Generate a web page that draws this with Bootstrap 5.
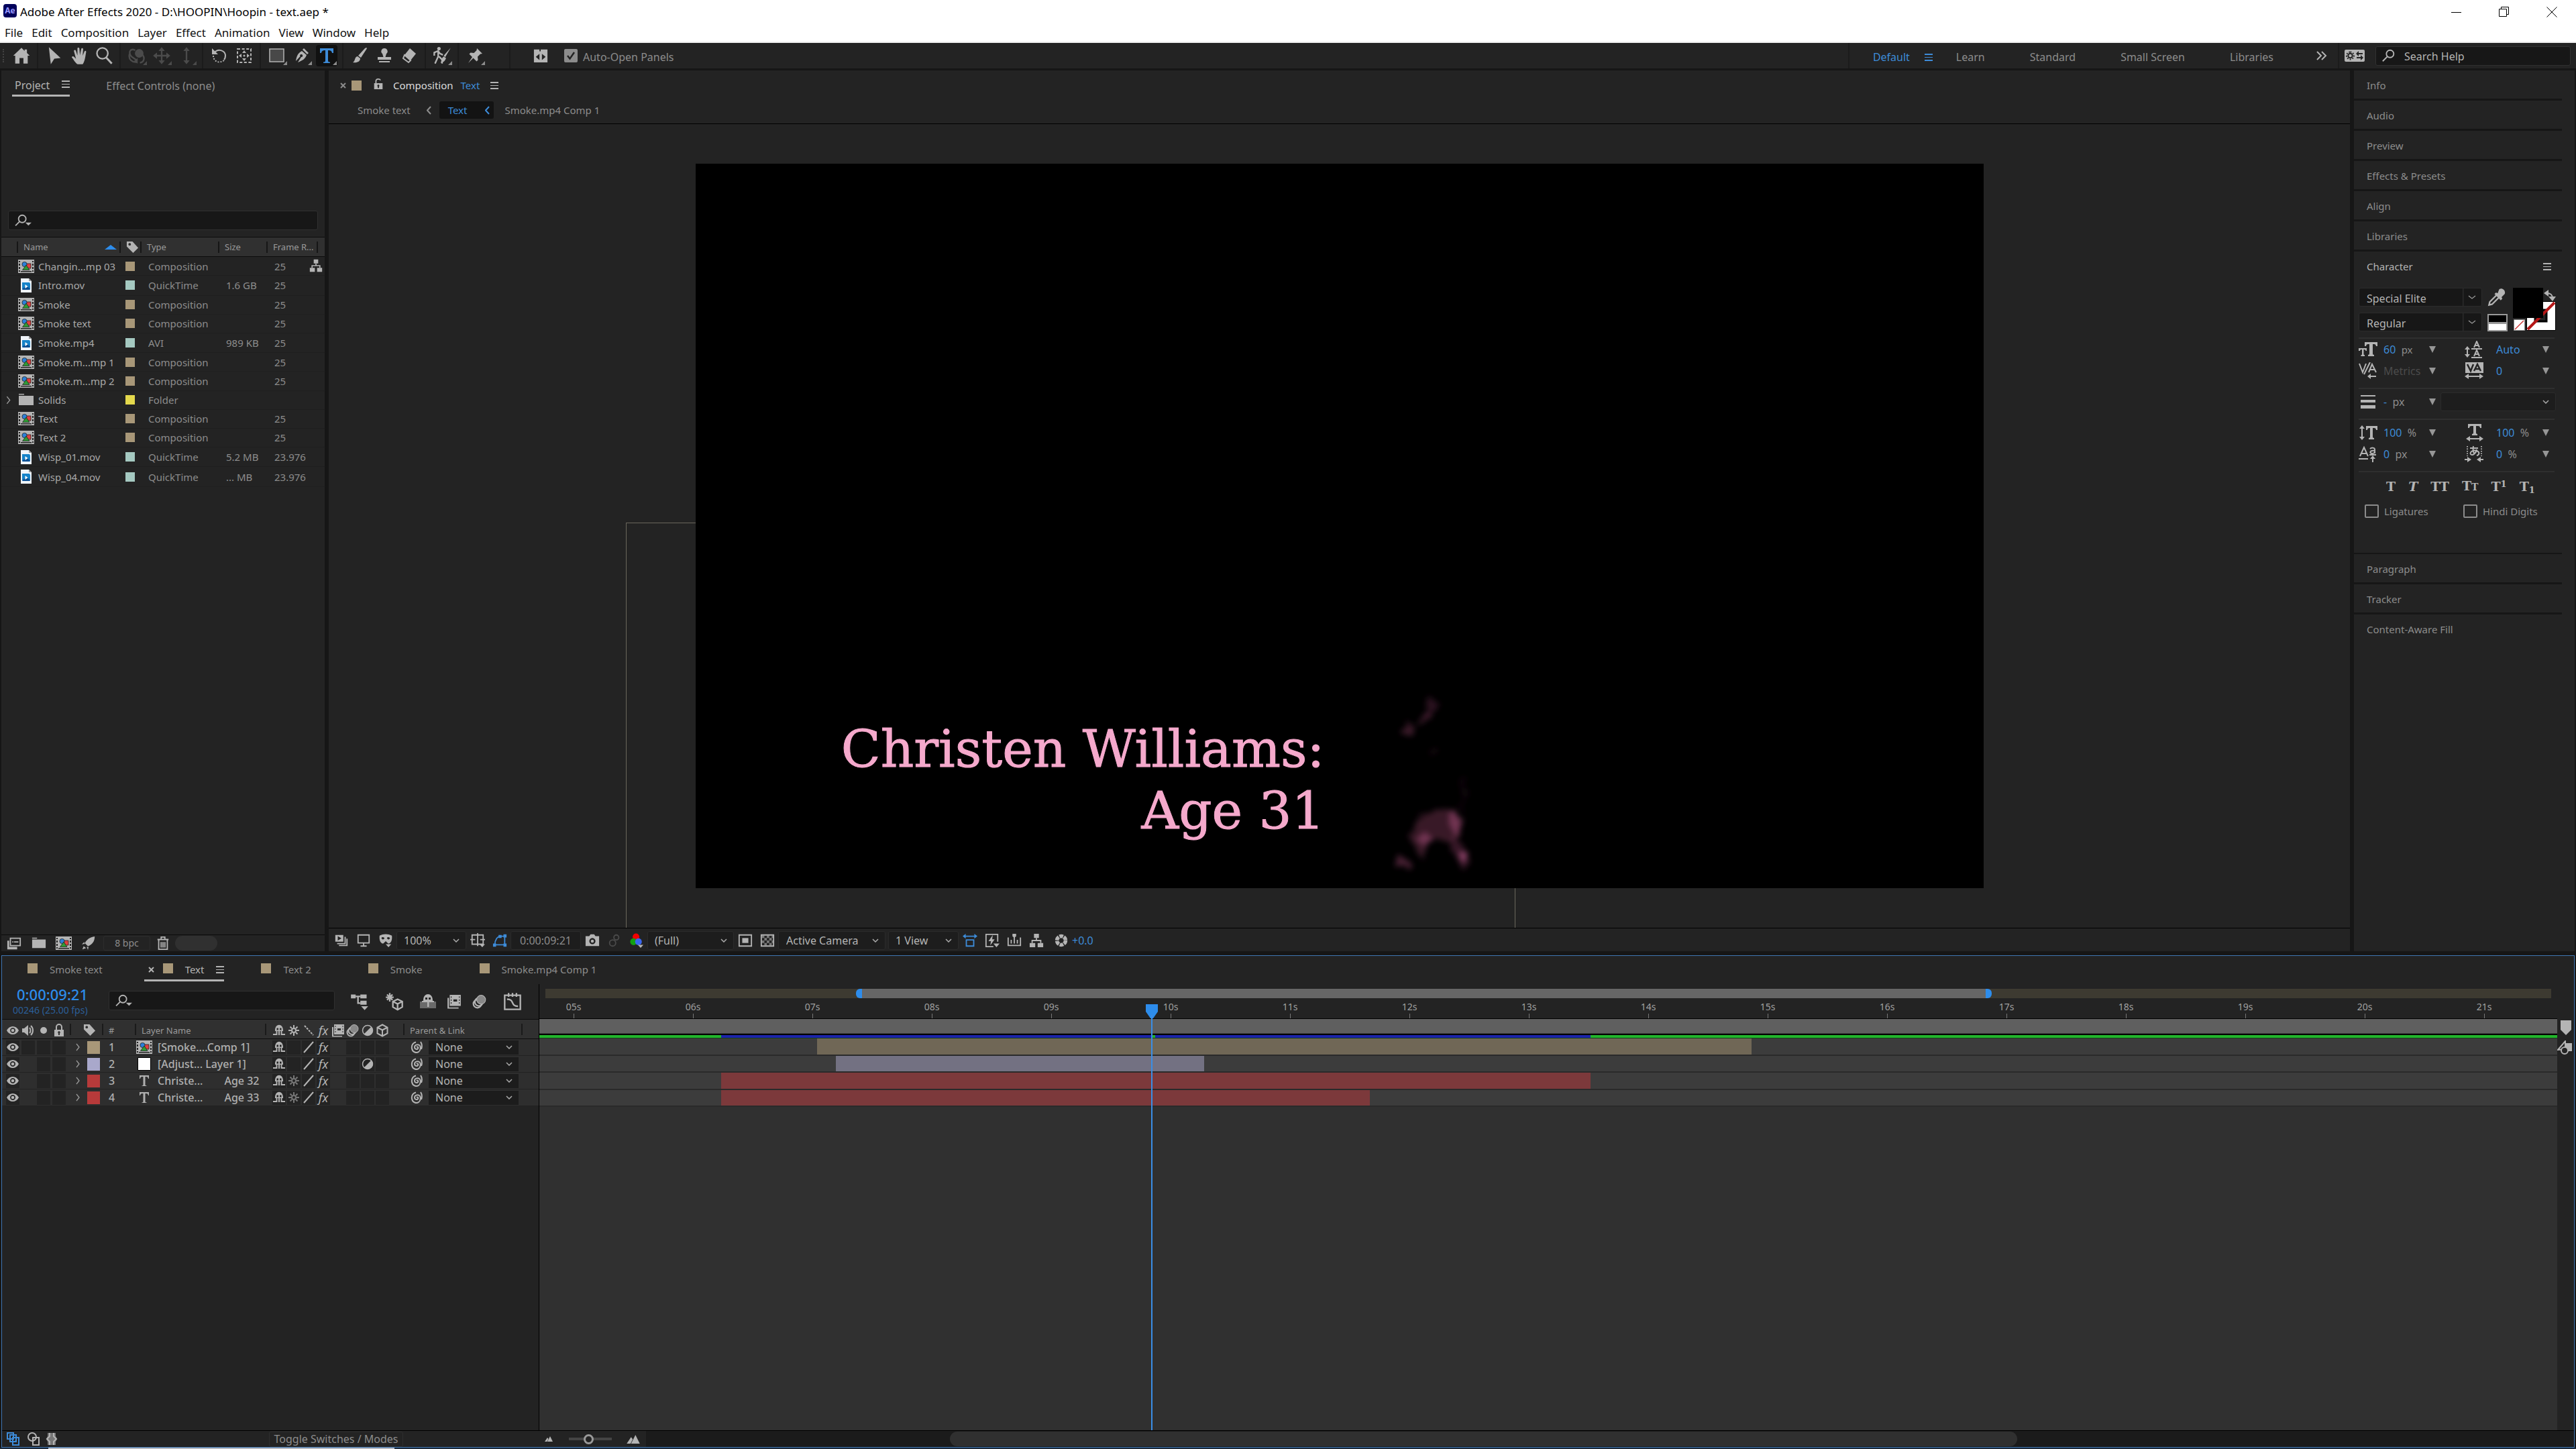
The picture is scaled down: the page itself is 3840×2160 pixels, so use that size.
<!DOCTYPE html>
<html lang="en">
<head>
<meta charset="utf-8">
<meta name="viewport" content="width=device-width, initial-scale=1">
<title>Adobe After Effects 2020</title>
<link href="https://cdn.jsdelivr.net/npm/bootstrap@5.3.0/dist/css/bootstrap.min.css" rel="stylesheet">
<style>
:root{--panel:#232323;--gap:#161616;--well:#171717;--txt:#8c8c8c;--lite:#b4b4b4;--blue:#3d8bd8;--line:#2d2d2d}
body{background:var(--gap);color:var(--txt);font:16px/20px "Noto Sans",sans-serif;overflow:hidden}
button,a,select,input{font:inherit;color:inherit;border:0;background:none;padding:0;text-decoration:none}
button,.navy a{flex:none;white-space:nowrap}
svg{display:block;flex:none;fill:currentColor}
.i{width:28px;height:28px;color:var(--lite)}
.i-md{width:24px;height:24px;color:var(--lite)}
.i-sm{width:22px;height:22px;color:var(--lite)}
.st{fill:none;stroke:currentColor;stroke-width:2}
.f15{font-size:15px}.f14{font-size:14px}.f13{font-size:13px}
.blue{color:var(--blue)!important}.lite{color:var(--lite)!important}.bright{color:#dcdcdc}
.dim{color:#4b4b4b!important}
.titlebar{height:32px;background:#fff;color:#000;padding:4px 1px 0 5px;font-size:17px}
.menubar{height:32px;background:#fff;color:#111;border-bottom:2px solid #eee;padding:4px 0 0 7px;gap:13px;font-size:17px}
.aelogo{width:20px;height:20px;border-radius:4px;background:#00005b;color:#9999ff;font:700 12px/20px "Noto Sans",sans-serif;text-align:center;margin:-4px 5px 0 0}
.winbtn{width:71px}
.toolbar{height:38px;background:var(--panel);margin-bottom:3px;padding-left:13px}
.tool{width:37px;height:38px;display:flex;align-items:center;justify-content:center;position:relative}
.tool.more::after{content:"";position:absolute;right:3px;bottom:5px;border:3px solid transparent;border-right-color:currentColor;border-bottom-color:currentColor}
.tool.on>svg{background:#111;border-radius:4px;color:var(--blue);width:32px;height:32px}
.vsep{width:2px;align-self:stretch;background:#1b1b1b;margin:0 5px}
.vsep.wide{margin:0 34px 0 33px}
.grip{width:3px;height:20px;border-left:2px dotted #444;margin-left:-9px;margin-right:6px}
.ticked{appearance:none;width:20px;height:20px;border-radius:2px;background:#8c8c8c url("data:image/svg+xml,%3Csvg xmlns='http://www.w3.org/2000/svg' viewBox='0 0 20 20'%3E%3Cpath d='M5 10l3.500 4.500L15 5' fill='none' stroke='%23222' stroke-width='2.500'/%3E%3C/svg%3E")}
.tickbox{appearance:none;width:21px;height:20px;border:2px solid #8c8c8c;border-radius:2px}
.wsnow{padding:4px 0 0 35px;gap:22px}
.workspaces{gap:67px;padding:4px 0 0 35px}
.searchbox{background:var(--well);border:1px solid #303030;border-radius:3px;height:29px;gap:12px;padding-left:8px}
.searchbox input{flex:1;min-width:0;outline:0;padding-top:2px}
.searchbox input::placeholder{color:var(--lite);opacity:1}
.helpbox{width:291px}
.projbox{margin:0 10px}
.ham{width:12px;height:11px;border-top:2px solid var(--lite);border-bottom:2px solid var(--lite);background:linear-gradient(var(--lite),var(--lite)) 0 3px/12px 1px no-repeat;flex:none}
.ham.blue{border-color:var(--blue);background-image:linear-gradient(var(--blue),var(--blue))}
.swatch{width:15px;height:15px;flex:none;background:#a89778}
.work{padding:0 2px;gap:6px;margin-bottom:6px}
.pane{background:var(--panel)}
.proj{width:482px}
.side{width:329px}
.tabrow{height:44px}
.tabon{height:39px;border-bottom:3px solid var(--lite);padding:7px 0 0 4px;gap:18px}
.tabon .ham{margin-bottom:2px}
.taboff{padding:13px 0 0 54px}
.preview{height:165px}
.ptable{table-layout:fixed;width:100%;height:373px;margin-top:10px;border-collapse:collapse;font-size:15px}
.ptable thead th{height:29px;background:#303030;border-top:1px solid #0c0c0c;border-bottom:1px solid #0c0c0c;font-size:13px;font-weight:400;color:#9a9a9a;padding:0;line-height:16px}
.ptable thead th>div{border-right:2px solid #161616;height:17px;padding-left:8px;display:flex;align-items:center;justify-content:space-between;white-space:nowrap}
.ptable tbody td{padding:0 0 0 10px;border-bottom:1px solid #1f1f1f;line-height:20px;white-space:nowrap}
.ptable tbody td.nm{padding:0;color:#a8a8a8}
.c-tw{width:25px}.c-nm{width:153px}.c-lb{width:31px}.c-ty{width:116px}.c-sz{width:72px}.c-fr{width:75px}
.sorted{color:#2d8ceb}
.nm>div{gap:6px}
.ptable tbody td.lb{padding-left:7px}
.lb .swatch{width:14px;height:14px}
.flowmark{position:absolute;left:-13px;top:3px}
.teal{background:#a5c9c1}.yel{background:#e4d84c}
.icomp{width:24px;height:20px}
.ifile{width:16px;height:21px;margin:0 4px}
.foot{height:25px;border-top:1px solid #0c0c0c}
.foot .cell,.vfoot .cell{display:flex;align-items:center;justify-content:center}
.foot .cell{width:37px}
.thumb{height:22px;border-radius:11px;background:#303030;min-width:63px}
.bpc{border:1px solid #2d2d2d;border-radius:3px;height:22px;width:70px;font-size:14px;line-height:20px}
.viewtabs{height:44px;padding-left:17px}
.viewtabs .ttl{margin:0 11px 0 13px}
.crumbs{height:35px;padding:0 0 5px 43px}
.crumbs>a+svg{margin:0 12px 0 24px}
.crumb-on{background:#131313;border-radius:3px;height:26px;padding:0 6px 0 13px;gap:27px}
.canvas{border-top:1px solid #000;padding:59px 0;overflow:hidden;position:relative}
.stage{width:50vw;aspect-ratio:16/9;background:#000;position:relative}
.bounds{position:absolute;left:443px;top:594px;width:1326px;bottom:-4px;border:1px solid #6b675c}
.stage-title{position:absolute;right:982px;top:827px;text-align:right;font:77px/92px "DejaVu Serif",serif;color:#f5a9cc;-webkit-text-stroke:1px #f5a9cc;white-space:nowrap}
.smoke{position:absolute;left:1020px;top:775px;width:180px;height:290px}
.vfoot{height:35px;border-top:1px solid #000;padding:2px 0 0 2px}
.vfoot .cell{width:33px;height:30px}
.pick{appearance:none;background:#1d1d1d url("data:image/svg+xml,%3Csvg xmlns='http://www.w3.org/2000/svg' width='10' height='6'%3E%3Cpath d='M1 1l4 4 4-4' fill='none' stroke='%23aaa' stroke-width='1.500'/%3E%3C/svg%3E") no-repeat right 9px center;border:1px solid #2b2b2b;border-radius:3px;color:var(--lite);height:28px;padding:0 10px;line-height:20px}
.w-mag{width:104px}.w-res{width:129px}.w-cam{width:160px;padding-left:11px}.w-view{width:105px}
.tcbox{width:105px;background-image:none;color:var(--txt)}
.navy .item{height:45px;border-bottom:3px solid #161616;padding:2px 0 0 19px;display:flex;align-items:center;font-size:15px}
.navy .item.open{border-color:transparent;padding-right:16px}
.navy .cap{height:2px;background:#161616}
.navy{width:310px}
.rule{height:2px;background:#2f2f2f;margin-top:9px}
.cbody{width:292px;margin:9px 0 0 7px}
.fonts{gap:9px;width:184px}
.fonts .pick{background:url("data:image/svg+xml,%3Csvg xmlns='http://www.w3.org/2000/svg' width='28' height='28'%3E%3Cpath d='M0 0v28' stroke='%232b2b2b' stroke-width='3'/%3E%3Cpath d='M9 12l5 4 5-4' fill='none' stroke='%23999' stroke-width='1.300'/%3E%3C/svg%3E") no-repeat right 0 center var(--well);width:184px;padding:3px 0 0 11px}
.w-strk{width:172px;margin-left:-36px}
.crow{display:grid;grid-template-columns:37px 68px 53px 47px 69px 18px;align-items:center;height:32px}
.crow.sub{margin-top:3px}
.crow .i{width:28px;height:26px}
.dn{border:5px solid transparent;border-top:10px solid #969696;border-bottom:0;width:10px;height:10px}
.crow button{text-align:left;justify-self:start}
.tstyles{font:700 19px/20px "DejaVu Serif","Liberation Serif",serif;color:var(--lite);gap:19px;padding:10px 0 0 41px}
.opts{padding:16px 0 52px 9px}
.opts .first{width:126px}
.colors{width:64px;height:64px}
.time{background:var(--panel);border:1px solid #3f76b3;margin:0 2px 0 2px}
.ttabs{height:42px;padding-left:15px;gap:32px}
.ttab{padding:2px 30px 0 23px;gap:18px;height:38px;font-size:15px;display:flex;align-items:center}
.ttab.on{padding:5px 0 0 6px;border-bottom:3px solid var(--lite)}
.ttab.on>svg{margin-right:-5px}
.ttab .swatch{margin-bottom:3px}
.tleft{width:800px;background:var(--panel)}
.tctl{height:52px}
.tcode{width:159px;padding-left:16px}
.tcode .big{font-size:22px;line-height:30px;padding-left:6px;font-weight:500;color:#2d8ceb}
.tcode .fps{font-size:14px;line-height:18px;color:#2b5f99}
.tctl .searchbox{width:337px;margin-top:10px}
.ticons{gap:16px;padding-left:23px}
.layers{table-layout:fixed;width:100%;border-collapse:collapse;font-size:16px;background:#2e2e2e;color:#b0b0b0}
.layers th{height:29px;background:#303030;border-top:1px solid #0c0c0c;border-bottom:1px solid #0c0c0c;font-size:13px;font-weight:400;color:#9a9a9a;padding:0}
.layers th>div{border-right:2px solid #1a1a1a;height:17px}
.layers td{padding:0;height:25px;border-bottom:1px solid #222;line-height:20px;white-space:nowrap}
.layers tbody{font-weight:500}
.layers .tagcell{padding-left:18px}
.k-av{width:103px}.k-lb{width:48px}.k-no{width:49px}.k-nm{width:194px}.k-sw{width:206px}
.four{display:grid;grid-template-columns:repeat(4,20px);gap:3px;padding-left:6px;align-items:center}
.eight{display:grid;grid-template-columns:repeat(8,20px);gap:2px;padding-left:9px;align-items:center}
.four>*,.eight>*{height:21px;display:flex;align-items:center;justify-content:center;color:var(--lite)}
td .four>*,td .eight>*{background:#232323}
td .gone{background:none!important}
.fx{font:italic 18px/20px "Noto Sans",sans-serif}
.four svg,.eight svg{width:20px;height:20px}
.faint{color:#777}
.chip{width:19px;height:19px}
.lav{background:#a9a8cb}.red{background:#b73a3a}
.parent{background-color:#1c1c1c;border:0;border-radius:0;height:21px;width:134px;font-weight:400}
.tright{border-left:1px solid #000;background:#303030}
.over{background:var(--panel);padding:7px 9px 0 9px}
.wa{height:14px;background:#3d3a31}
.wa-on{background:#666;border-left:9px solid #2d8ceb;border-right:9px solid #2d8ceb;border-radius:6px;height:14px}
.ruler{height:30px;background:var(--panel);overflow:hidden;padding:3px 20px 0 0}
.ruler>div{margin-left:-38px}
.ruler span{flex:1;text-align:center;font-size:14px;line-height:20px;color:#a0a0a0;height:27px;background:linear-gradient(#777,#777) center bottom/1px 7px no-repeat}
.band{height:23px;background:#5f5f5f;border-top:1px solid #000;border-bottom:1px solid #444}
.cache{height:7px;border-top:2px solid #000;border-bottom:1px solid #14401a;background:#22b52c}
.cache>div{background:#1b24ac}
.track{background:#3c3c3c;border-bottom:2px solid #2a2a2a}
.track>div{height:100%}
.tracks{height:102px}
.b-sand{background:#706756}.b-lav{background:#737182}.b-red{background:#7c393b}
.head{position:absolute;top:30px;bottom:0;width:18px;margin-left:-9px;color:#2d8ceb}
.head::after{content:"";position:absolute;top:16px;bottom:0;left:8px;width:2px;background:#3a8ee6}
.gutter{width:25px;padding-top:54px}
.tfoot{height:25px;border-top:1px solid #000;background:#1b1b1b}
.tfoot .lft{width:960px;background:var(--panel);padding-left:5px}
.toggle{border:1px solid #2e2e2e;border-radius:3px;width:200px;height:23px;line-height:20px;margin:0 210px 0 309px}
.zoomer{appearance:none;width:64px;height:20px;background:linear-gradient(#444,#444) center/100% 4px no-repeat;margin:0 19px 0 23px}
.zoomer::-webkit-slider-thumb{appearance:none;width:15px;height:15px;border:3px solid #999;border-radius:50%;background:#232323}
.hscroll{padding:1px 830px 0 453px}
.desk{height:2px;background:#1b2a3d;padding-left:72px}
.desk>div{width:516px;height:2px;background:#b8bcc4}
</style>
</head>
<body class="d-flex flex-column min-vh-100">
<svg width="0" height="0" class="position-absolute" aria-hidden="true"><defs>
<symbol id="home" viewBox="0 0 24 24"><path d="M12 2L1.500 12H4v10h5.500v-7h5v7H20V12h2.500L19 8.600V4h-3v2z"/></symbol>
<symbol id="arrow" viewBox="0 0 24 24"><path d="M5 1l15 14-8 .8L7.500 23z"/></symbol>
<symbol id="hand" viewBox="0 0 24 24"><path d="M10 23c-3-1.500-5-6-7.500-9 .8-1.500 2.300-1.300 3.400 0L8 16 5.300 6c0-1.500 2-1.800 2.500-.3l2 6L9.800 3c0-1.700 2.300-1.700 2.500 0l.7 8.300 1.700-8c.4-1.500 2.500-1.200 2.400.4L16.500 12l2.300-5.500c.6-1.300 2.400-.7 2.100.8C20 12 19.500 19 16.500 23z"/></symbol>
<symbol id="mag" viewBox="0 0 24 24"><g class="st"><circle cx="10" cy="9" r="7"/><path d="M15 14.500l7 7.500" stroke-width="2.500"/></g></symbol>
<symbol id="magl" viewBox="0 0 24 24"><g class="st"><circle cx="14" cy="9" r="6"/><path d="M9.500 13.500L2 21"/></g></symbol>
<symbol id="magd" viewBox="0 0 28 24"><g class="st"><circle cx="12" cy="9" r="6"/><path d="M7.500 13.500L1 20"/></g><path d="M17 15h10l-5 5z"/></symbol>
<symbol id="orbit" viewBox="0 0 24 24"><path class="st" d="M3 9c-3 8 4 12 9 11M10 5C3 2 1 8 5 13l7 5M17 9c6 4 5 11-1 12"/><circle cx="15" cy="9" r="5.500"/><path d="M13 15v7l-5-3z"/></symbol>
<symbol id="move" viewBox="0 0 24 24"><path d="M12 1l4 5h-3v5h5V8l5 4-5 4v-3h-5v5h3l-4 5-4-5h3v-5H6v3l-5-4 5-4v3h5V6H8z"/></symbol>
<symbol id="dolly" viewBox="0 0 24 24"><path d="M12 1l4 5h-3v12h3l-4 5-4-5h3V6H8z"/></symbol>
<symbol id="rot" viewBox="0 0 24 24"><path class="st" d="M5 7c5-6 15-3 16 4 0 4-1 6-2 7"/><path class="st" stroke-dasharray="2 2" d="M3 12c0 9 9 12 16 7"/><path d="M1 1v9h9z"/></symbol>
<symbol id="anchor" viewBox="0 0 24 24"><path class="st" stroke-dasharray="4 2.600" d="M2 2h20v20H2z"/><path d="M12 4l3 4h-6zM12 20l3-4h-6zM4 12l4-3v6zM20 12l-4-3v6z"/><circle cx="12" cy="12" r="1.500"/></symbol>
<symbol id="rect" viewBox="0 0 24 24"><path fill="#484848" stroke="currentColor" stroke-width="1.500" d="M1 2h21v19H1z"/></symbol>
<symbol id="pen" viewBox="0 0 24 24"><path d="M15 1l7 7-2 2-7-7zM12 5l7 6c-2 6-6 8-13 11l5-8a2 2 0 1 0-1.500-1L3 20C4 13 6 8 12 5z"/></symbol>
<symbol id="type" viewBox="0 0 32 32"><path d="M6 5h20v7h-2c-.5-3-2-4-5-4h-1V23c0 2 .5 2.500 3 2.500V27H11v-1.500c2.500 0 3-.5 3-2.500V8h-1c-3 0-4.500 1-5 4H6z"/></symbol>
<symbol id="brush" viewBox="0 0 24 24"><path d="M22 0c1 0 1 1 .5 2L14 15l-4-3L20 1zM9 13l4 3c0 5-5 7-11 6 4-2 2-8 7-9z"/></symbol>
<symbol id="stamp" viewBox="0 0 24 24"><path d="M12 1a4.500 4.500 0 0 1 3 8l-1.500 5H22v4H2v-4h8.500L9 9a4.500 4.500 0 0 1 3-8zM4 20h16v2H4z"/></symbol>
<symbol id="eraser" viewBox="0 0 24 24"><path d="M13 1l9 8-8 10-9-8z"/><path class="st" stroke-width="1.500" d="M5 11l9 8-3 3-8-6z"/></symbol>
<symbol id="roto" viewBox="0 0 24 24"><circle cx="8" cy="3" r="2.200"/><path class="st" stroke-width="1.800" d="M2 12V8l5-2 2 3 4 2M7 7v6l-4 9M8 13l4 4v5"/><path d="M23 2l-7 12-2-2zM14 13l3 2c-1 4-4 6-7 6 2-2 1-6 4-8z"/></symbol>
<symbol id="pin" viewBox="0 0 24 24"><path d="M15 1l8 8-3 .5-4 4 .5 5-2 2-5-5L2 23l6-9-4.500-4.500 2-2 5 .5 4-4z"/></symbol>
<symbol id="panelx" viewBox="0 0 24 24"><path fill-rule="evenodd" d="M1 2h9v3h2V2h11v21H1zM10 9l-6 5 6 5zM14 9v10l6-5z"/></symbol>
<symbol id="gears" viewBox="0 0 30 18"><rect width="30" height="18" rx="2"/><g fill="none" stroke="#232323" stroke-width="2"><circle cx="8.500" cy="9" r="3.200"/><path stroke-dasharray="1.800 2.200" d="M8.500 3.500a5.500 5.500 0 1 1-.1 0"/><path d="M18 6h9M18 12h9"/></g><path fill="#232323" d="M17 6l4-4v8zM28 12l-4-4v8z"/></symbol>
<symbol id="comp" viewBox="0 0 24 20"><path fill="#b4b4b4" d="M0 0h24v20H0z"/><path fill="#232323" d="M1 2h2v2H1zM1 6h2v3H1zM1 11h2v3H1zM1 16h2v2H1zM21 2h2v2h-2zM21 6h2v3h-2zM21 11h2v3h-2zM21 16h2v2h-2zM4 17h16v1.500H4z"/><path fill="#e04040" stroke="#222" stroke-width=".8" d="M12 6h7v7h-7z"/><circle cx="9.500" cy="7" r="3.600" fill="#2d80d8" stroke="#222" stroke-width=".8"/><path fill="#2f9a35" stroke="#222" stroke-width=".8" d="M12 8l5 7.500H6.500z"/></symbol>
<symbol id="file" viewBox="0 0 16 21"><path fill="#eef3f8" d="M0 0h12l4 4v17H0z"/><path fill="#999" d="M12 0v4h4z"/><path fill="#1583c9" d="M2 6h11l1 2v8l-1 1H3l-1-1z"/><path fill="#0a4f94" d="M2 16l7-5 5 5-1 1H3z"/><path fill="#fff" d="M6.500 9v6l4-3z"/></symbol>
<symbol id="folder" viewBox="0 0 24 20"><path fill="#b4b4b4" d="M1 1h8v1.500H1zM1 4h22v14H1z"/></symbol>
<symbol id="tag" viewBox="0 0 20 20"><path fill-rule="evenodd" d="M1 1h9l9 10-8 8L1 9zM5.500 3.500a2 2 0 1 0 .1 0z"/></symbol>
<symbol id="flow" viewBox="0 0 24 24"><path d="M8 1h8v7H8zM1 16h9v7H1zM14 16h9v7h-9z"/><path class="st" d="M12 8v4M5 16v-4h14v4"/></symbol>
<symbol id="chevr" viewBox="0 0 12 12"><path fill="none" stroke="#9a9a9a" stroke-width="1.300" d="M4 1l4 5-4 5"/></symbol>
<symbol id="interp" viewBox="0 0 24 24"><path d="M1 8h3v10h13v4H1z"/><path class="st" d="M6 4h16v12H6z"/><path d="M9 9h2v2H9zM12 9h7v2h-7z"/></symbol>
<symbol id="rocket" viewBox="0 0 24 24"><path d="M22 1c0 8-4 13-11 16l-5-5C9 6 14 2 22 1zM5 10l-4 4 5-1zM12 18l-1 5-2-5zM4 17l4 3-6 2z"/></symbol>
<symbol id="trash" viewBox="0 0 24 24"><path class="st" d="M3 6h18M9 5V2h6v3M5 7v15h14V7M9 10v9M12 10v9M15 10v9"/></symbol>
<symbol id="lock" viewBox="0 0 20 20"><path fill-rule="evenodd" d="M3 9h14v10H3zM10 11a2 2 0 0 0-1 3.500V17h2v-2.500A2 2 0 0 0 10 11z"/><path class="st" d="M6 9V5a4 4 0 0 1 8 0v4"/></symbol>
<symbol id="unlock" viewBox="0 0 20 20"><path fill-rule="evenodd" d="M3 9h14v10H3zM10 11a2 2 0 0 0-1 3.500V17h2v-2.500A2 2 0 0 0 10 11z"/><path class="st" d="M6 9V5a4 3.500 0 0 1 7.500-1"/></symbol>
<symbol id="stack" viewBox="0 0 24 24"><path fill-rule="evenodd" d="M2 3h13v11H2zM6 5v7l6-3.500z"/><path class="st" d="M17 7h1v10H6v-1M20 10h1v10H9v-1"/></symbol>
<symbol id="mon" viewBox="0 0 24 24"><path class="st" d="M3 3h18v13H3zM12 16v4M7 21h10"/></symbol>
<symbol id="mask" viewBox="0 0 24 24"><path fill-rule="evenodd" d="M2 4c7-3 13-3 20 0 1 8-2 13-6 13l-4-4-4 4C4 17 1 12 2 4zM5 8c1 3 4 3 5 0-2-2-4-2-5 0zM14 8c1 3 4 3 5 0-2-2-4-2-5 0z"/><path d="M12 18h9l-4.500 5z"/></symbol>
<symbol id="grid" viewBox="0 0 24 24"><path class="st" stroke-width="1.700" d="M3 3h18v15H3zM12 0v21M0 10.500h8M16 10.500h8"/><path d="M15 18h9l-4.500 5z"/></symbol>
<symbol id="shape" viewBox="0 0 24 24"><path class="st" d="M4 19C4 11 8 5 14 5h6v14z"/><path d="M1 17h5v5H1zM18 17h5v5h-5zM18 2h5v5h-5zM10 3h5v5h-5z"/></symbol>
<symbol id="cam" viewBox="0 0 24 24"><path fill-rule="evenodd" d="M1 5h6l2-3h6l2 3h6v16H1zM12 8a5 5 0 1 0 .1 0z"/><circle cx="12" cy="13" r="2.500"/></symbol>
<symbol id="snap" viewBox="0 0 24 24"><g class="st"><circle cx="9" cy="16" r="5"/><circle cx="15" cy="7" r="4"/></g></symbol>
<symbol id="rgb" viewBox="0 0 24 24"><circle cx="11" cy="6" r="5.500" fill="#f00000"/><circle cx="7" cy="14" r="5.500" fill="#12a012"/><circle cx="15" cy="14" r="5.500" fill="#3a66f0"/><path d="M14 19h9l-4.500 5z"/></symbol>
<symbol id="roi" viewBox="0 0 24 24"><path class="st" d="M2 3h20v18H2z"/><path d="M7 8h10v8H7z"/></symbol>
<symbol id="check" viewBox="0 0 24 24"><path class="st" stroke-width="1.500" d="M2 3h20v18H2z"/><path opacity=".6" d="M3 4h4v4H3zM11 4h4v4h-4zM7 8h4v4H7zM15 8h4v4h-4zM3 12h4v4H3zM11 12h4v4h-4zM7 16h4v4H7zM15 16h4v4h-4zM19 4h3v4h-3zM19 12h3v4h-3z"/></symbol>
<symbol id="par" viewBox="0 0 24 24"><path class="st" d="M3 5h18M6 11h12v10H6z"/><path d="M0 5l5-4v8zM24 5l-5-4v8z"/></symbol>
<symbol id="fast" viewBox="0 0 24 24"><path class="st" d="M21 14V2H2v20h12"/><path d="M13 3L6 13h4l-1 7 7-10h-4zM14 17h10l-5 6z"/></symbol>
<symbol id="tl" viewBox="0 0 24 24"><path class="st" d="M2 7v13h20V7M7 11v6M12 6v11M17 11v6"/><path d="M9 1h6v4l-3 3-3-3z"/></symbol>
<symbol id="iris" viewBox="0 0 24 24"><circle cx="12" cy="12" r="7" fill="none" stroke="currentColor" stroke-width="6" stroke-dasharray="6 1.300"/></symbol>
<symbol id="eye" viewBox="0 0 20 20"><path fill-rule="evenodd" d="M1 10c4-8 14-8 18 0-4 8-14 8-18 0zM10 6a4 4 0 1 0 .1 0z"/><circle cx="10" cy="10" r="2.300"/></symbol>
<symbol id="spk" viewBox="0 0 20 20"><path d="M1 7h3l6-5v16l-6-5H1z"/><path class="st" stroke-width="1.600" d="M12 6c2 2 2 6 0 8M14 3c4 4 4 10 0 14"/></symbol>
<symbol id="solo" viewBox="0 0 20 20"><circle cx="10" cy="10" r="5"/></symbol>
<symbol id="shy" viewBox="0 0 20 20"><path fill-rule="evenodd" d="M4 10c0-11 12-11 12 0v1H4zM6.500 6.500v3h2.500v-3zM11 6.500v3h2.500v-3z"/><path d="M9 11h2v6H9z"/><path class="st" stroke-width="1.600" d="M1 16h5.500v-5M19 16h-5.500v-5"/></symbol>
<symbol id="sun" viewBox="0 0 20 20"><g class="st" stroke-width="1.600"><circle cx="10" cy="10" r="3"/><path d="M10 2v4M10 14v4M2 10h4M14 10h4M4.500 4.500l2.500 2.500M13 13l2.500 2.500M4.500 15.500L7 13M13 7l2.500-2.500"/></g></symbol>
<symbol id="qual" viewBox="0 0 20 20"><path class="st" stroke-dasharray="3 1.500" stroke-width="2.500" d="M4 3l13 14"/></symbol>
<symbol id="slash" viewBox="0 0 20 20"><path class="st" d="M3 18L17 2"/></symbol>
<symbol id="frame" viewBox="0 0 20 20"><path d="M1 5h2v13h13v1.500H1z"/><path fill-rule="evenodd" d="M4 1h15v15H4zM5.500 3v2h1V3zM5.500 7v2h1V7zM5.500 11v2h1v-2zM16.500 3v2h1V3zM16.500 7v2h1V7zM16.500 11v2h1v-2zM9 7v3h5V7z"/></symbol>
<symbol id="blur" viewBox="0 0 20 20"><g class="st" stroke-width="1.300"><circle cx="7" cy="13" r="5.500"/><circle cx="9" cy="10.500" r="5.500"/></g><circle cx="12" cy="7.500" r="6" fill="#888" stroke="currentColor"/></symbol>
<symbol id="adj" viewBox="0 0 20 20"><circle cx="10" cy="10" r="7.500" fill="none" stroke="currentColor" stroke-width="1.500"/><path d="M15.500 4.500a7.500 7.500 0 0 1-11 11z"/></symbol>
<symbol id="cube" viewBox="0 0 20 20"><path class="st" stroke-width="1.500" d="M10 1.500l7.500 4v9l-7.500 4-7.500-4v-9zM2.500 5.500l7.500 4 7.500-4M10 9.500v9"/></symbol>
<symbol id="spiral" viewBox="0 0 20 20"><path class="st" stroke-width="1.300" d="M10 10c1-1 3 0 2 2s-5 1-5-2 4-5 7-3 2 8-1 10-9 1-10-5 3-9 6-9.500M16 2c2 3 2 8 1 11"/></symbol>
<symbol id="flowt" viewBox="0 0 24 24"><path d="M1 3h6v5H1zM13 3h8v5h-8zM13 11h8v5h-8z"/><path class="st" d="M7 5.500h6M10 5.500V14h3"/><path d="M14 18h9l-4.500 5z"/></symbol>
<symbol id="draft" viewBox="0 0 24 24"><path class="st" stroke-width="1.500" d="M6 1v11M1 6.500h10M2.500 3l7 7M9.500 3l-7 7M16 9l6 3v7l-6 3.500-6-3.500v-7zM10 12l6 3 6-3M16 15v7"/></symbol>
<symbol id="graph" viewBox="0 0 24 24"><path class="st" stroke-width="1.600" d="M2 4h20v18H2zM7 1v5M12 1v5M17 1v5M5 9c10 0 4 9 14 9"/></symbol>
<symbol id="shyb" viewBox="0 0 24 24"><path fill="#6a6a6a" d="M0 12h24v10H0z"/><path fill-rule="evenodd" d="M5 10c0-12 14-12 14 0v1H5zM8 6v3h3V6zM13 6v3h3V6z"/><path d="M11 11h2.500v9H11zM3 11h18v2H3z"/></symbol>
<symbol id="T" viewBox="0 0 20 20"><path d="M3 2h14v5h-1c-.3-2-1-3-3-3h-1.500v12c0 1 .5 1.200 2 1.200v.8h-7v-.8c1.500 0 2-.2 2-1.200V4H7C5 4 4.300 5 4 7H3z"/></symbol>
<symbol id="TT" viewBox="0 0 28 26"><path d="M9 2h19v6h-2c-.5-2-1-3-3-3h-2v14c0 1 .5 2 2 2v2h-9v-2c1.500 0 2-1 2-2V5h-2c-2 0-2.500 1-3 3H9z"/><path d="M0 11h12v4h-1.500c0-1-.5-2-2-2H7.500v7c0 1 .5 1 1.500 1v2H3.500v-2c1 0 1.500 0 1.500-1v-7H4c-1.500 0-2 1-2 2H0z"/></symbol>
<symbol id="lead" viewBox="0 0 28 26"><path class="st" stroke-width="1.600" d="M14 10l4-9 4 9M10 12h16M15 7h6M14 23l4-9 4 9M10 25h16M15 20h6M4 12v11"/><path d="M4 8l4 5H0zM4 25l-4-5h8z"/></symbol>
<symbol id="kern" viewBox="0 0 28 26"><path class="st" stroke-width="1.700" d="M1 2l5 13 5-13M8 18L17 0M15 15l5-12 6 12M17 11h7"/><path class="st" stroke-width="1.700" d="M17 21h9"/><path d="M13 21l5-4v8z"/></symbol>
<symbol id="track" viewBox="0 0 28 26"><path d="M1 0h27v16H1z"/><path fill="none" stroke="#232323" stroke-width="2.500" d="M4 3l5 10 4-10M14 13l5-10 5 10M16 10h6"/><path class="st" d="M4 21h21"/><path d="M0 21l6-4v8zM28 21l-6-4v8z"/></symbol>
<symbol id="strk" viewBox="0 0 28 26"><path d="M3 3h22v2H3zM3 10h22v4H3zM3 18h22v5H3z"/></symbol>
<symbol id="vsc" viewBox="0 0 28 26"><path d="M11 3h17v6h-2c0-2-1-3-3-3h-2v13c0 1 .5 2 2 2v2h-8v-2c1.500 0 2-1 2-2V6h-1c-2 0-3 1-3 3h-2zM5 2l4 5H6v12h3l-4 5-4-5h3V7H1z"/></symbol>
<symbol id="hsc" viewBox="0 0 28 26"><path d="M5 0h20v6h-2c0-2-1-3-3-3h-3v10c0 1 .5 2 2 2v2h-8v-2c1.500 0 2-1 2-2V3h-3c-2 0-3 1-3 3H5zM2 22l6-4v3h14v-3l6 4-6 4v-3H8v3z"/></symbol>
<symbol id="base" viewBox="0 0 28 26"><path class="st" stroke-width="1.700" d="M2 16L8 3l6 13M4 12h8M0 20h14M16 14h10M21 25v-7M17 5c2-2 7-2 7 1v6M24 8c-8-1-8 4-4 4 2 0 4-1 4-2"/><path d="M21 15l4 5h-8z"/></symbol>
<symbol id="tsume" viewBox="0 0 28 26"><path class="st" stroke-width="1.500" stroke-dasharray="1.500 2" d="M4 1v15M25 1v15"/><path class="st" stroke-width="1.500" d="M8 4h12M13 1c-1 6 0 10 2 12M18 6c-1 6-7 10-9 7s4-7 9-5 4 6 0 7"/><path d="M0 20h4v-3l6 4-6 4v-3H0zM28 20h-4v-3l-6 4 6 4v-3h4z"/></symbol>
<symbol id="drop" viewBox="0 0 24 24"><path d="M15 2c3-3 9 1 7 6l-4 4 1 2-2 2L9 8l2-2 2 1z"/><path class="st" stroke-width="1.800" d="M12 9L3 18l-1 4 4-1 9-9"/></symbol>
<symbol id="mtn" viewBox="0 0 24 16"><path d="M0 16L8 4l3 4-4 8zM8 16L16 0l8 16z"/></symbol>
<symbol id="marker" viewBox="0 0 18 22"><path d="M1 0h16v14l-8 8-8-8z"/></symbol>
</defs></svg>

<header>
  <div class="titlebar d-flex align-items-center">
    <span class="aelogo">Ae</span><span>Adobe After Effects 2020 - D:\HOOPIN\Hoopin - text.aep *</span>
    <div class="ms-auto d-flex">
      <button class="winbtn" aria-label="Minimize"><svg class="m-auto" width="16" height="16"><path d="M0 8h15v1H0z"/></svg></button>
      <button class="winbtn" aria-label="Restore"><svg class="m-auto" width="16" height="16"><path fill="none" stroke="#000" d="M.5 3.500h11v11H.5zM3.500 3V.5h11v11H12"/></svg></button>
      <button class="winbtn" aria-label="Close"><svg class="m-auto" width="16" height="16"><path stroke="#000" d="M.5.5l15 15M15.500.5l-15 15"/></svg></button>
    </div>
  </div>
  <nav class="menubar d-flex align-items-center"><a href="#">File</a><a href="#">Edit</a><a href="#">Composition</a><a href="#">Layer</a><a href="#">Effect</a><a href="#">Animation</a><a href="#">View</a><a href="#">Window</a><a href="#">Help</a></nav>
</header>

<div class="toolbar d-flex align-items-center">
  <i class="grip"></i>
  <button class="tool" aria-label="Home"><svg class="i"><use href="#home"/></svg></button><i class="vsep"></i>
  <button class="tool" aria-label="Selection"><svg class="i"><use href="#arrow"/></svg></button>
  <button class="tool" aria-label="Hand"><svg class="i"><use href="#hand"/></svg></button>
  <button class="tool" aria-label="Zoom"><svg class="i"><use href="#mag"/></svg></button><i class="vsep"></i>
  <button class="tool more dim" aria-label="Orbit"><svg class="i dim"><use href="#orbit"/></svg></button>
  <button class="tool more dim" aria-label="Pan"><svg class="i dim"><use href="#move"/></svg></button>
  <button class="tool more dim" aria-label="Dolly"><svg class="i dim"><use href="#dolly"/></svg></button><i class="vsep"></i>
  <button class="tool" aria-label="Rotate"><svg class="i-md"><use href="#rot"/></svg></button>
  <button class="tool" aria-label="Anchor point"><svg class="i-md"><use href="#anchor"/></svg></button><i class="vsep"></i>
  <button class="tool more" aria-label="Rectangle"><svg class="i-md"><use href="#rect"/></svg></button>
  <button class="tool more" aria-label="Pen"><svg class="i-md"><use href="#pen"/></svg></button>
  <button class="tool more on" aria-label="Type"><svg><use href="#type"/></svg></button><i class="vsep"></i>
  <button class="tool" aria-label="Brush"><svg class="i-md"><use href="#brush"/></svg></button>
  <button class="tool" aria-label="Clone stamp"><svg class="i-md"><use href="#stamp"/></svg></button>
  <button class="tool" aria-label="Eraser"><svg class="i-md"><use href="#eraser"/></svg></button><i class="vsep"></i>
  <button class="tool more" aria-label="Roto brush"><svg class="i"><use href="#roto"/></svg></button><i class="vsep"></i>
  <button class="tool more" aria-label="Puppet pin"><svg class="i-md"><use href="#pin"/></svg></button>
  <i class="vsep wide"></i>
  <svg class="i-sm me-4"><use href="#panelx"/></svg>
  <input class="ticked" type="checkbox" id="autoopen" checked><label for="autoopen" class="ms-2 pt-1">Auto-Open Panels</label>
  <div class="ms-auto d-flex align-items-center align-self-stretch">
    <i class="vsep me-0"></i>
    <div class="wsnow d-flex align-items-center"><a href="#" class="blue">Default</a><i class="ham blue"></i></div>
    <nav class="workspaces d-flex"><a href="#">Learn</a><a href="#">Standard</a><a href="#">Small Screen</a><a href="#">Libraries</a></nav>
    <button aria-label="More workspaces" class="ms-5 ps-3"><svg width="16" height="14" class="lite"><path class="st" stroke-width="2.500" d="M1 1l6 6-6 6M8 1l6 6-6 6"/></svg></button>
    <i class="vsep ms-3 me-2"></i>
    <svg width="30" height="18" class="lite me-3"><use href="#gears"/></svg>
    <div class="searchbox helpbox d-flex align-items-center me-2"><svg class="i-sm"><use href="#magl"/></svg><input type="search" placeholder="Search Help" aria-label="Search Help"></div>
  </div>
</div>

<main class="work d-flex">
  <section class="pane proj d-flex flex-column">
    <div class="tabrow d-flex ps-3">
      <div class="tabon d-flex align-items-center"><span class="lite">Project</span><i class="ham"></i></div>
      <div class="taboff"><a href="#">Effect Controls (none)</a></div>
    </div>
    <div class="preview"></div>
    <div class="searchbox projbox d-flex align-items-center"><svg width="28" height="22" class="lite"><use href="#magd"/></svg><input type="search" aria-label="Search project"></div>
    <table class="ptable">
      <colgroup><col class="c-tw"><col class="c-nm"><col class="c-lb"><col class="c-ty"><col class="c-sz"><col class="c-fr"><col></colgroup>
      <thead><tr><th><div></div></th><th><div><span>Name</span><svg width="18" height="7" class="me-1 sorted"><path d="M0 7l9-7 9 7z"/></svg></div></th><th><div><svg width="19" height="19" class="lite"><use href="#tag"/></svg></div></th><th><div>Type</div></th><th><div>Size</div></th><th><div>Frame R...</div></th><th></th></tr></thead>
      <tbody>
      <tr><td></td><td class="nm"><div class="d-flex align-items-center"><svg class="icomp"><use href="#comp"/></svg>Changin...mp 03</div></td><td class="lb"><div class="swatch"></div></td><td>Composition</td><td></td><td>25</td><td class="position-relative"><svg class="flowmark lite" width="20" height="20"><use href="#flow"/></svg></td></tr>
      <tr><td></td><td class="nm"><div class="d-flex align-items-center"><svg class="ifile"><use href="#file"/></svg>Intro.mov</div></td><td class="lb"><div class="swatch teal"></div></td><td>QuickTime</td><td>1.6 GB</td><td>25</td><td></td></tr>
      <tr><td></td><td class="nm"><div class="d-flex align-items-center"><svg class="icomp"><use href="#comp"/></svg>Smoke</div></td><td class="lb"><div class="swatch"></div></td><td>Composition</td><td></td><td>25</td><td></td></tr>
      <tr><td></td><td class="nm"><div class="d-flex align-items-center"><svg class="icomp"><use href="#comp"/></svg>Smoke text</div></td><td class="lb"><div class="swatch"></div></td><td>Composition</td><td></td><td>25</td><td></td></tr>
      <tr><td></td><td class="nm"><div class="d-flex align-items-center"><svg class="ifile"><use href="#file"/></svg>Smoke.mp4</div></td><td class="lb"><div class="swatch teal"></div></td><td>AVI</td><td>989 KB</td><td>25</td><td></td></tr>
      <tr><td></td><td class="nm"><div class="d-flex align-items-center"><svg class="icomp"><use href="#comp"/></svg>Smoke.m...mp 1</div></td><td class="lb"><div class="swatch"></div></td><td>Composition</td><td></td><td>25</td><td></td></tr>
      <tr><td></td><td class="nm"><div class="d-flex align-items-center"><svg class="icomp"><use href="#comp"/></svg>Smoke.m...mp 2</div></td><td class="lb"><div class="swatch"></div></td><td>Composition</td><td></td><td>25</td><td></td></tr>
      <tr><td class="ps-1"><svg width="13" height="13"><use href="#chevr"/></svg></td><td class="nm"><div class="d-flex align-items-center"><svg class="icomp"><use href="#folder"/></svg>Solids</div></td><td class="lb"><div class="swatch yel"></div></td><td>Folder</td><td></td><td></td><td></td></tr>
      <tr><td></td><td class="nm"><div class="d-flex align-items-center"><svg class="icomp"><use href="#comp"/></svg>Text</div></td><td class="lb"><div class="swatch"></div></td><td>Composition</td><td></td><td>25</td><td></td></tr>
      <tr><td></td><td class="nm"><div class="d-flex align-items-center"><svg class="icomp"><use href="#comp"/></svg>Text 2</div></td><td class="lb"><div class="swatch"></div></td><td>Composition</td><td></td><td>25</td><td></td></tr>
      <tr><td></td><td class="nm"><div class="d-flex align-items-center"><svg class="ifile"><use href="#file"/></svg>Wisp_01.mov</div></td><td class="lb"><div class="swatch teal"></div></td><td>QuickTime</td><td>5.2 MB</td><td>23.976</td><td></td></tr>
      <tr><td></td><td class="nm"><div class="d-flex align-items-center"><svg class="ifile"><use href="#file"/></svg>Wisp_04.mov</div></td><td class="lb"><div class="swatch teal"></div></td><td>QuickTime</td><td>... MB</td><td>23.976</td><td></td></tr>
      </tbody>
    </table>
    <div class="foot d-flex align-items-center mt-auto">
      <button class="cell" aria-label="Interpret footage"><svg class="i-sm"><use href="#interp"/></svg></button>
      <button class="cell" aria-label="New folder"><svg class="i-sm"><use href="#folder"/></svg></button>
      <button class="cell" aria-label="New composition"><svg class="icomp"><use href="#comp"/></svg></button>
      <button class="cell" aria-label="Project settings"><svg class="i-sm"><use href="#rocket"/></svg></button>
      <button class="bpc ms-1">8 bpc</button>
      <button class="cell" aria-label="Delete"><svg class="i-sm"><use href="#trash"/></svg></button>
      <div class="thumb"></div>
    </div>
  </section>

  <section class="pane flex-grow-1 d-flex flex-column">
    <div class="viewtabs d-flex align-items-center f15">
      <button aria-label="Close tab"><svg width="9" height="9"><path class="st" stroke-width="1.500" d="M1 1l7 7M8 1l-7 7"/></svg></button>
      <i class="swatch ms-2 me-3"></i><svg width="18" height="18" class="lite mb-1"><use href="#unlock"/></svg>
      <span class="ttl bright">Composition</span><a href="#" class="blue">Text</a><i class="ham ms-3"></i>
    </div>
    <nav class="crumbs d-flex align-items-center f15">
      <a href="#">Smoke text</a><svg width="7" height="13"><path class="st" stroke-width="1.300" d="M6 1L1 6.500 6 12"/></svg>
      <a href="#" class="crumb-on blue d-flex align-items-center">Text<svg width="7" height="13"><path class="st" stroke-width="1.300" d="M6 1L1 6.500 6 12"/></svg></a>
      <a href="#" class="ms-3">Smoke.mp4 Comp 1</a>
    </nav>
    <div class="canvas d-flex justify-content-center">
      <div class="bounds"></div>
      <div class="stage">
        <div class="stage-title">Christen Williams:<br>Age 31</div>
        <svg class="smoke" viewBox="0 0 180 290"><defs><filter id="soft" x="-50%" y="-50%" width="200%" height="200%"><feTurbulence type="fractalNoise" baseFrequency=".05" numOctaves="3" seed="4" result="n"/><feDisplacementMap in="SourceGraphic" in2="n" scale="22"/><feGaussianBlur stdDeviation="4"/></filter></defs>
          <g filter="url(#soft)" fill="#8c3c62">
            <path opacity=".3" d="M74 22l14 6-6 20-14 6z"/><path opacity=".35" d="M66 40l14 8-12 12-16 4z"/><ellipse cx="40" cy="68" rx="11" ry="9" opacity=".42"/>
            <path opacity=".16" d="M78 92l6 2-1 16-5 1z"/>
            <path opacity=".4" d="M46 218c8-22 24-20 40-24 16-8 30 0 34 12 2 16-6 30-16 32-12-6-20-10-36-2l-4 26c-10-14-22-24-18-44z"/>
            <path opacity=".38" d="M106 226l18 14 16 32-16 6-16-24z"/>
            <ellipse cx="112" cy="208" rx="9" ry="16" fill="#a8507c" opacity=".5"/><ellipse cx="128" cy="260" rx="9" ry="7" fill="#b05584" opacity=".65"/>
            <ellipse cx="64" cy="230" rx="12" ry="8" fill="#a8507c" opacity=".5"/><ellipse cx="34" cy="269" rx="12" ry="7" opacity=".5"/>
            <path opacity=".12" d="M124 140h5l-4 50h-6z"/>
          </g></svg>
      </div>
    </div>
    <div class="vfoot d-flex align-items-center">
      <button class="cell" aria-label="Always preview"><svg class="i-sm"><use href="#stack"/></svg></button>
      <button class="cell" aria-label="Primary viewer"><svg class="i-sm"><use href="#mon"/></svg></button>
      <button class="cell" aria-label="Mask view"><svg class="i-sm"><use href="#mask"/></svg></button>
      <select class="pick w-mag" aria-label="Magnification"><option>100%</option></select>
      <button class="cell" aria-label="Guides"><svg class="i-sm"><use href="#grid"/></svg></button>
      <button class="cell blue" aria-label="Toggle mask"><svg class="i-sm blue"><use href="#shape"/></svg></button>
      <button class="pick tcbox">0:00:09:21</button>
      <button class="cell" aria-label="Snapshot"><svg class="i-sm"><use href="#cam"/></svg></button>
      <button class="cell" aria-label="Show snapshot"><svg class="i-sm dim"><use href="#snap"/></svg></button>
      <button class="cell" aria-label="Channels"><svg class="i-sm"><use href="#rgb"/></svg></button>
      <select class="pick w-res" aria-label="Resolution"><option>(Full)</option></select>
      <button class="cell" aria-label="Region of interest"><svg class="i-sm"><use href="#roi"/></svg></button>
      <button class="cell" aria-label="Transparency grid"><svg class="i-sm"><use href="#check"/></svg></button>
      <select class="pick w-cam" aria-label="3D view"><option>Active Camera</option></select>
      <select class="pick w-view ms-1" aria-label="View layout"><option>1 View</option></select>
      <button class="cell" aria-label="Pixel aspect"><svg class="i-sm blue"><use href="#par"/></svg></button>
      <button class="cell" aria-label="Fast previews"><svg class="i-sm"><use href="#fast"/></svg></button>
      <button class="cell" aria-label="Timeline"><svg class="i-sm"><use href="#tl"/></svg></button>
      <button class="cell" aria-label="Flowchart"><svg class="i-sm"><use href="#flow"/></svg></button>
      <button class="cell ms-1" aria-label="Exposure"><svg class="i-sm"><use href="#iris"/></svg></button>
      <button class="blue">+0.0</button>
    </div>
  </section>

  <aside class="pane side">
    <nav class="navy">
      <a class="item" href="#">Info</a><a class="item" href="#">Audio</a><a class="item" href="#">Preview</a><a class="item" href="#">Effects &amp; Presets</a><a class="item" href="#">Align</a><a class="item" href="#">Libraries</a>
      <div class="item open lite justify-content-between">Character<i class="ham"></i></div>
    </nav>
    <div class="cbody">
      <div class="d-flex">
        <div class="fonts d-flex flex-column"><select class="pick" aria-label="Font family"><option>Special Elite</option></select><select class="pick" aria-label="Font style"><option>Regular</option></select></div>
        <div class="d-flex flex-column justify-content-between ms-2 me-2"><svg width="28" height="28" class="lite"><use href="#drop"/></svg><svg width="30" height="26"><path fill="#000" stroke="#999" stroke-width="2" d="M1 1h28v12H1z"/><path fill="#fff" stroke="#999" stroke-width="2" d="M1 14h28v11H1z"/></svg></div>
        <svg class="colors" viewBox="0 0 64 64"><path fill="#fff" stroke="#000" d="M20.500 20.500h43v43h-43z"/><path fill="#232323" stroke="#000" stroke-width="3" d="M33 33h17v17H33z"/><path stroke="#b51717" stroke-width="4" d="M22 62L62 22"/><path d="M0 0h45v45H0z" fill="#000"/><path fill="#fff" stroke="#888" d="M1.500 47.500h16v16h-16z"/><path stroke="#c33" stroke-width="1.500" d="M3 62l13-13"/><path class="st lite" stroke-width="3" d="M50 8c6 0 9 2 9 8"/><path fill="#b4b4b4" d="M46 8l7-5v10zM53 13h11l-5 7z"/></svg>
      </div>
      <div class="rule"></div>
      <div class="crow"><svg class="i"><use href="#TT"/></svg><span><button class="blue">60</button> &nbsp;<span class="f15">px</span></span><i class="dn"></i><svg class="i"><use href="#lead"/></svg><button class="blue">Auto</button><i class="dn"></i></div>
      <div class="crow"><svg class="i"><use href="#kern"/></svg><button class="dim">Metrics</button><i class="dn"></i><svg class="i"><use href="#track"/></svg><button class="blue">0</button><i class="dn"></i></div>
      <div class="rule"></div>
      <div class="crow sub"><svg class="i"><use href="#strk"/></svg><span><button class="blue">-</button> &nbsp;px</span><i class="dn"></i><select class="pick w-strk" aria-label="Stroke order"><option></option></select></div>
      <div class="rule"></div>
      <div class="crow sub"><svg class="i"><use href="#vsc"/></svg><span><button class="blue">100</button> &nbsp;%</span><i class="dn"></i><svg class="i"><use href="#hsc"/></svg><span><button class="blue">100</button> &nbsp;%</span><i class="dn"></i></div>
      <div class="crow"><svg class="i"><use href="#base"/></svg><span><button class="blue">0</button> &nbsp;px</span><i class="dn"></i><svg class="i"><use href="#tsume"/></svg><span><button class="blue">0</button> &nbsp;%</span><i class="dn"></i></div>
      <div class="rule"></div>
      <div class="tstyles d-flex"><button><b>T</b></button><button><i>T</i></button><button>TT</button><button>T<span class="f14">T</span></button><button>T<sup class="f13">1</sup></button><button>T<sub class="f13">1</sub></button></div>
      <div class="opts d-flex align-items-center f15"><input class="tickbox" type="checkbox" id="lig"><label for="lig" class="first ps-2">Ligatures</label><input class="tickbox" type="checkbox" id="hin"><label for="hin" class="ps-2">Hindi Digits</label></div>
    </div>
    <nav class="navy"><div class="cap"></div><a class="item" href="#">Paragraph</a><a class="item" href="#">Tracker</a><a class="item open" href="#">Content-Aware Fill</a></nav>
  </aside>
</main>

<section class="time flex-grow-1 d-flex flex-column">
  <div class="ttabs d-flex">
    <a class="ttab" href="#"><i class="swatch"></i>Smoke text</a>
    <a class="ttab on lite" href="#"><svg width="9" height="9"><path class="st" stroke-width="1.500" d="M1 1l7 7M8 1l-7 7"/></svg><i class="swatch"></i>Text<i class="ham"></i></a>
    <a class="ttab" href="#"><i class="swatch"></i>Text 2</a>
    <a class="ttab" href="#"><i class="swatch"></i>Smoke</a>
    <a class="ttab" href="#"><i class="swatch"></i>Smoke.mp4 Comp 1</a>
  </div>
  <div class="d-flex flex-grow-1">
    <div class="tleft">
      <div class="tctl d-flex">
        <div class="tcode"><div class="big">0:00:09:21</div><div class="fps">00246 (25.00 fps)</div></div>
        <div class="searchbox d-flex align-items-center"><svg width="28" height="22" class="lite"><use href="#magd"/></svg><input type="search" aria-label="Search layers"></div>
        <div class="ticons d-flex align-items-center">
          <svg class="i"><use href="#flowt"/></svg><svg class="i ms-2"><use href="#draft"/></svg><svg class="i-md ms-2"><use href="#shyb"/></svg><svg class="i-sm"><use href="#frame"/></svg><svg class="i-sm"><use href="#blur"/></svg><svg class="i ms-2"><use href="#graph"/></svg>
        </div>
      </div>
      <table class="layers">
        <colgroup><col class="k-av"><col class="k-lb"><col class="k-no"><col class="k-nm"><col class="k-sw"><col></colgroup>
        <thead><tr>
          <th><div class="four"><span><svg><use href="#eye"/></svg></span><span><svg><use href="#spk"/></svg></span><span><svg><use href="#solo"/></svg></span><span><svg><use href="#lock"/></svg></span></div></th>
          <th><div class="tagcell"><svg width="19" height="19" class="lite"><use href="#tag"/></svg></div></th><th><div class="ps-2">#</div></th><th><div class="ps-2">Layer Name</div></th>
          <th><div class="eight"><span><svg><use href="#shy"/></svg></span><span><svg><use href="#sun"/></svg></span><span><svg><use href="#qual"/></svg></span><span class="fx">fx</span><span><svg><use href="#frame"/></svg></span><span><svg><use href="#blur"/></svg></span><span><svg><use href="#adj"/></svg></span><span><svg><use href="#cube"/></svg></span></div></th>
          <th><div class="ps-2 me-4">Parent &amp; Link</div></th></tr></thead>
        <tbody>
        <tr><td><div class="four"><span><svg><use href="#eye"/></svg></span><span></span><span></span><span></span></div></td><td><div class="d-flex align-items-center ps-1"><svg width="12" height="14" class="me-2"><use href="#chevr"/></svg><i class="chip swatch"></i></div></td><td class="ps-2">1</td><td><div class="d-flex align-items-center gap-2"><svg class="icomp"><use href="#comp"/></svg>[Smoke....Comp 1]</div></td><td><div class="eight"><span><svg><use href="#shy"/></svg></span><span></span><span><svg><use href="#slash"/></svg></span><span class="fx">fx</span><span class="gone"></span><span></span><span></span><span></span></div></td><td><div class="d-flex align-items-center ps-1"><svg width="20" height="20" class="lite ms-1 me-2"><use href="#spiral"/></svg><select class="pick parent" aria-label="Parent of layer 1"><option>None</option></select></div></td></tr>
        <tr><td><div class="four"><span><svg><use href="#eye"/></svg></span><span class="gone"></span><span></span><span></span></div></td><td><div class="d-flex align-items-center ps-1"><svg width="12" height="14" class="me-2"><use href="#chevr"/></svg><i class="chip lav"></i></div></td><td class="ps-2">2</td><td><div class="d-flex align-items-center gap-2"><svg class="icomp"><path fill="#fff" stroke="#000" d="M2.500.5h19v19h-19z"/></svg>[Adjust... Layer 1]</div></td><td><div class="eight"><span><svg><use href="#shy"/></svg></span><span></span><span><svg><use href="#slash"/></svg></span><span class="fx">fx</span><span class="gone"></span><span></span><span><svg><use href="#adj"/></svg></span><span></span></div></td><td><div class="d-flex align-items-center ps-1"><svg width="20" height="20" class="lite ms-1 me-2"><use href="#spiral"/></svg><select class="pick parent" aria-label="Parent of layer 2"><option>None</option></select></div></td></tr>
        <tr><td><div class="four"><span><svg><use href="#eye"/></svg></span><span class="gone"></span><span></span><span></span></div></td><td><div class="d-flex align-items-center ps-1"><svg width="12" height="14" class="me-2"><use href="#chevr"/></svg><i class="chip red"></i></div></td><td class="ps-2">3</td><td><div class="d-flex align-items-center gap-2"><svg class="icomp"><use href="#T"/></svg><span>Christe...</span><span class="ms-4">Age 32</span></div></td><td><div class="eight"><span><svg><use href="#shy"/></svg></span><span><svg class="faint"><use href="#sun"/></svg></span><span><svg><use href="#slash"/></svg></span><span class="fx">fx</span><span class="gone"></span><span></span><span></span><span></span></div></td><td><div class="d-flex align-items-center ps-1"><svg width="20" height="20" class="lite ms-1 me-2"><use href="#spiral"/></svg><select class="pick parent" aria-label="Parent of layer 3"><option>None</option></select></div></td></tr>
        <tr><td><div class="four"><span><svg><use href="#eye"/></svg></span><span class="gone"></span><span></span><span></span></div></td><td><div class="d-flex align-items-center ps-1"><svg width="12" height="14" class="me-2"><use href="#chevr"/></svg><i class="chip red"></i></div></td><td class="ps-2">4</td><td><div class="d-flex align-items-center gap-2"><svg class="icomp"><use href="#T"/></svg><span>Christe...</span><span class="ms-4">Age 33</span></div></td><td><div class="eight"><span><svg><use href="#shy"/></svg></span><span><svg class="faint"><use href="#sun"/></svg></span><span><svg><use href="#slash"/></svg></span><span class="fx">fx</span><span class="gone"></span><span></span><span></span><span></span></div></td><td><div class="d-flex align-items-center ps-1"><svg width="20" height="20" class="lite ms-1 me-2"><use href="#spiral"/></svg><select class="pick parent" aria-label="Parent of layer 4"><option>None</option></select></div></td></tr>
        </tbody>
      </table>
    </div>
    <div class="tright flex-grow-1 position-relative">
      <div class="over"><div class="wa"><div class="wa-on" style="margin-left:15.500%;width:56.600%"></div></div></div>
      <div class="ruler"><div class="d-flex"><span>05s</span><span>06s</span><span>07s</span><span>08s</span><span>09s</span><span>10s</span><span>11s</span><span>12s</span><span>13s</span><span>14s</span><span>15s</span><span>16s</span><span>17s</span><span>18s</span><span>19s</span><span>20s</span><span>21s</span></div></div>
      <div class="band"></div>
      <div class="cache d-flex"><div style="margin-left:9.020%;width:21.300%"></div><div style="margin-left:.200%;width:21.560%"></div></div>
      <div class="tracks d-flex flex-column">
        <div class="track flex-fill"><div class="b-sand" style="margin-left:13.750%;width:46.330%"></div></div>
        <div class="track flex-fill"><div class="b-lav" style="margin-left:14.680%;width:18.250%"></div></div>
        <div class="track flex-fill"><div class="b-red" style="margin-left:9.020%;width:43.060%"></div></div>
        <div class="track flex-fill"><div class="b-red" style="margin-left:9.020%;width:32.150%"></div></div>
      </div>
      <div class="head" style="left:30.350%"><svg width="18" height="21" viewBox="0 0 18 21"><path d="M0 0h18v11l-7 10H7L0 11z"/></svg></div>
    </div>
    <div class="gutter"><svg width="18" height="22" class="lite ms-1"><use href="#marker"/></svg><svg width="22" height="22" class="lite mt-2"><path d="M10 4h12v12H10z"/><path fill="#232323" stroke="currentColor" stroke-width="2" d="M1 14L12 1v12z"/><circle cx="11" cy="15" r="5" fill="#232323" stroke="currentColor" stroke-width="2"/></svg></div>
  </div>
  <div class="tfoot d-flex">
    <div class="lft d-flex align-items-center">
      <button class="me-1" aria-label="Layer switches"><svg width="28" height="22" class="blue"><path class="st" stroke-width="1.600" d="M3 2h9v9H3zM7 5h9v10H7zM11 9h9v11h-9z"/><circle cx="15.500" cy="14.500" r="1.500"/></svg></button>
      <button class="me-1" aria-label="Transfer controls"><svg width="24" height="22" class="lite"><circle cx="8" cy="8" r="6" class="st"/><path class="st" d="M9 9h9v11H9z"/></svg></button>
      <button aria-label="In and out"><svg width="24" height="22" class="lite"><path d="M3 2h12v5l2 4-2 4v5H3v-5l-2-4 2-4z" fill="#777"/><path class="st" d="M6 2v5l-4 4 4 4v5M12 2v5l4 4-4 4v5"/></svg></button>
      <button class="toggle">Toggle Switches / Modes</button>
      <svg width="14" height="8" class="lite"><use href="#mtn"/></svg>
      <input type="range" class="zoomer" min="0" max="100" value="44" aria-label="Timeline zoom">
      <svg width="26" height="13" class="lite"><use href="#mtn"/></svg>
    </div>
    <div class="hscroll flex-grow-1"><div class="thumb"></div></div>
  </div>
</section>
<footer class="desk"><div></div></footer>
<script src="https://cdn.jsdelivr.net/npm/bootstrap@5.3.0/dist/js/bootstrap.bundle.min.js"></script>
</body>
</html>
